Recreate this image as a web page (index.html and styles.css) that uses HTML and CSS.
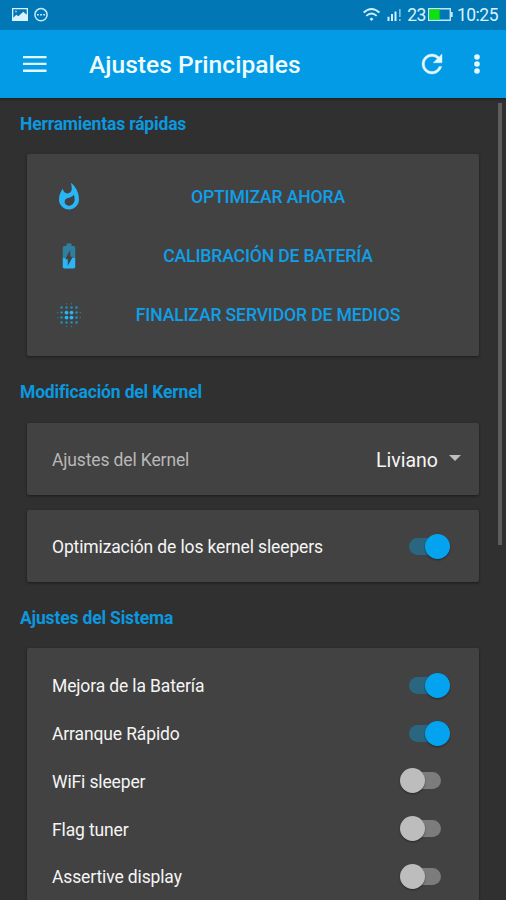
FILE: index.html
```html
<!DOCTYPE html>
<html lang="es">
<head>
<meta charset="utf-8">
<title>Ajustes Principales</title>
<link rel="stylesheet" href="styles.css">
</head>
<body>
<div class="status">
  <svg class="status-left" width="38" height="16" viewBox="0 0 38 16">
    <path fill="#d9f3ff" fill-rule="evenodd" d="M0 1h16v13H0zM1.300 2.300v8.500l3-3 2 1.500 5-4.500 3.400 3V2.300z"/>
    <circle cx="4" cy="4.500" r="1" fill="#8cc9ea"/>
    <circle cx="29" cy="7.700" r="6.100" fill="none" stroke="#c5eafc" stroke-width="1.500"/>
    <path fill="#c5eafc" d="M25 6.900h1.900v1.700H25zM28.100 6.900H30v1.700h-1.900zM31.200 6.900h1.900v1.700h-1.900z"/>
  </svg>
  <div class="status-right">
    <svg width="40" height="16" viewBox="0 0 40 16">
      <g fill="none" stroke="#cdefff" stroke-width="1.900"><path d="M.6 5.500Q8.500-1.700 16.400 5.500M3.300 8.900Q8.500 4.300 13.700 8.900"/></g>
      <path fill="#cdefff" d="M8.500 10.500l2 1.600-2 2-2-2zM24.500 9.800h2V14h-2zM28 7h2v7h-2zM31.500 4.500h2V14h-2z"/>
      <path fill="#7dbfe3" d="M36 2h1.700v8H36zM36 12h1.700v2H36z"/>
    </svg>
    <span class="percent">23</span>
    <svg class="battery" width="25" height="14" viewBox="0 0 25 14"><path d="M.7.700h21.600v11.600H.7z" fill="none" stroke="#bfe8fb" stroke-width="1.400"/><path fill="#0be30b" d="M1.400 1.400h10.200v10.200H1.400z"/><path fill="#bfe8fb" d="M23 4h1.700v5H23z"/></svg>
    <span class="clock">10:25</span>
  </div>
</div>
<header class="appbar">
  <svg class="menu" width="24" height="18" viewBox="0 0 24 18"><path fill="#e4f8ff" d="M0 1h23.500v2.300H0zM0 7.800h23.500v2.300H0zM0 14.600h23.500v2.300H0z"/></svg>
  <h1>Ajustes Principales</h1>
  <svg class="refresh" viewBox="0 0 24 24"><path fill="#e4f8ff" stroke="#e4f8ff" stroke-width=".3" d="M17.650 6.350C16.200 4.900 14.210 4 12 4c-4.420 0-7.990 3.580-7.990 8s3.570 8 7.990 8c3.730 0 6.840-2.550 7.730-6h-2.080c-.82 2.330-3.040 4-5.650 4-3.310 0-6-2.690-6-6s2.690-6 6-6c1.660 0 3.140.69 4.220 1.780L13 11h7V4z"/></svg>
  <svg class="more" viewBox="0 0 6 20"><g fill="#e4f8ff"><circle cx="3" cy="3" r="2.800"/><circle cx="3" cy="10" r="2.800"/><circle cx="3" cy="17" r="2.800"/></g></svg>
</header>
<main>
  <h2>Herramientas rápidas</h2>
  <section class="card tools">
    <div class="tool">
      <svg viewBox="0 0 24 24"><path fill="#29b6f6" d="M13.500.67s.74 2.650.74 4.800c0 2.060-1.350 3.730-3.410 3.730-2.070 0-3.630-1.670-3.630-3.730l.03-.36C5.210 7.510 4 10.620 4 14c0 4.420 3.580 8 8 8s8-3.580 8-8C20 8.610 17.410 3.800 13.500.67zM11.710 19c-1.780 0-3.220-1.400-3.220-3.140 0-1.620 1.050-2.760 2.810-3.120 1.770-.36 3.600-1.210 4.620-2.580.39 1.290.59 2.650.59 4.040 0 2.650-2.150 4.800-4.800 4.800z"/></svg>
      <span>OPTIMIZAR AHORA</span>
    </div>
    <div class="tool">
      <svg viewBox="0 0 24 24"><path fill="#2f7f9f" d="M15.670 4H14V2h-4v2H8.330C7.600 4 7 4.600 7 5.330V13.500h2.530L13 7v5.500h2l-.53 1H17V5.330C17 4.600 16.400 4 15.670 4z"/><path fill="#29b6f6" d="M14.470 13.500L11 20v-5.500H9l.53-1H7v7.170C7 21.400 7.600 22 8.330 22h7.330c.74 0 1.340-.6 1.340-1.330V13.500z"/></svg>
      <span>CALIBRACIÓN DE BATERÍA</span>
    </div>
    <div class="tool">
      <svg viewBox="0 0 24 24"><g fill="#2290c0"><circle cx="6" cy="6" r="1"/><circle cx="10" cy="6" r="1"/><circle cx="14" cy="6" r="1"/><circle cx="18" cy="6" r="1"/><circle cx="6" cy="10" r="1"/><circle cx="18" cy="10" r="1"/><circle cx="6" cy="14" r="1"/><circle cx="18" cy="14" r="1"/><circle cx="6" cy="18" r="1"/><circle cx="10" cy="18" r="1"/><circle cx="14" cy="18" r="1"/><circle cx="18" cy="18" r="1"/><circle cx="10" cy="3" r=".5"/><circle cx="14" cy="3" r=".5"/><circle cx="10" cy="21" r=".5"/><circle cx="14" cy="21" r=".5"/><circle cx="3" cy="10" r=".5"/><circle cx="3" cy="14" r=".5"/><circle cx="21" cy="10" r=".5"/><circle cx="21" cy="14" r=".5"/></g><g fill="#29b6f6"><circle cx="10" cy="10" r="1.500"/><circle cx="14" cy="10" r="1.500"/><circle cx="10" cy="14" r="1.500"/><circle cx="14" cy="14" r="1.500"/></g></svg>
      <span>FINALIZAR SERVIDOR DE MEDIOS</span>
    </div>
  </section>
  <h2>Modificación del Kernel</h2>
  <section class="card single">
    <span class="muted">Ajustes del Kernel</span>
    <span class="select">Liviano<i class="caret"></i></span>
  </section>
  <section class="card single">
    <span>Optimización de los kernel sleepers</span><i class="switch on"></i>
  </section>
  <h2>Ajustes del Sistema</h2>
  <section class="card list">
    <div class="row"><span>Mejora de la Batería</span><i class="switch on"></i></div>
    <div class="row"><span>Arranque Rápido</span><i class="switch on"></i></div>
    <div class="row"><span>WiFi sleeper</span><i class="switch"></i></div>
    <div class="row"><span>Flag tuner</span><i class="switch"></i></div>
    <div class="row"><span>Assertive display</span><i class="switch"></i></div>
  </section>
  <div class="scrollbar"></div>
</main>
</body>
</html>
```
FILE: styles.css
```css
* { box-sizing: border-box; }
body {
  margin: 0;
  height: 900px;
  overflow: hidden;
  display: flex;
  flex-direction: column;
  background: #303030;
  color: #f5f5f5;
  font-family: Roboto, "Liberation Sans", sans-serif;
}
svg { display: block; flex: none; }
h1, h2 { margin: 0; font-weight: 500; white-space: nowrap; }

.status {
  flex: none;
  height: 30px;
  padding: 0 8px 0 12px;
  display: flex;
  justify-content: space-between;
  align-items: center;
  background: #0277b6;
  color: #d9f3ff;
  font-size: 17.500px;
  letter-spacing: -.5px;
}
.status-right { display: flex; align-items: center; }
.percent { margin-left: 4px; }
.battery { margin: 0 4px 0 2px; }

.appbar {
  flex: none;
  height: 68px;
  padding: 0 26px 0 23px;
  display: flex;
  align-items: center;
  background: #039be5;
  color: #eefbff;
}
.appbar h1 { margin-left: 42px; flex: 1; font-size: 24.600px; line-height: 32px; padding-top: 2px; }
.refresh { width: 30px; height: 30px; margin-right: 27px; }
.more { width: 6px; height: 20px; }

main { flex: 1; min-height: 0; position: relative; padding: 0 27px; box-shadow: inset 0 3px 3px -2px #1c1c1c; }
h2 { margin-left: -7px; color: #0b98df; font-size: 17.500px; letter-spacing: -.17px; font-weight: 700; line-height: 20px; }
h2:first-child { padding-top: 16px; }

.card { background: #424242; border-radius: 2px; box-shadow: 0 1px 3px rgba(0, 0, 0, .45); }
.tools { height: 202px; margin: 20px 0 26px; padding: 13px 27px; }
.tool { height: 59px; display: flex; align-items: center; color: #0f9fe8; font-size: 17.600px; letter-spacing: -.15px; font-weight: 500; white-space: nowrap; }
.tool svg { width: 30px; height: 30px; }
.tool span { flex: 1; text-align: center; }

.single, .row {
  display: flex;
  align-items: center;
  justify-content: space-between;
  font-size: 17.500px;
  letter-spacing: -.13px;
  white-space: nowrap;
}
.single span, .row span { padding-top: 2px; }
.single { height: 72px; padding: 0 29px 0 25px; }
h2 + .single { margin: 21px 0 15px; padding-right: 18px; }
.single + h2 { margin-top: 26px; }
.muted { color: #b8b8b8; }
.select { display: flex; align-items: center; font-size: 19.500px; letter-spacing: 0; }
.caret { margin: -4px 0 0 11px; border: 6px solid transparent; border-top: 6px solid #bdbdbd; border-bottom: 0; }

.list { height: 270px; margin-top: 20px; padding: 13.500px 29px 0 25px; }
.row { height: 47.750px; }

.switch { width: 50px; height: 26px; padding-left: 9px; display: flex; align-items: center; position: relative; }
.switch::before { content: ""; width: 32px; height: 17px; border-radius: 9px; background: #7c7c7c; }
.switch::after {
  content: "";
  position: absolute;
  left: 0;
  width: 25px;
  height: 25px;
  border-radius: 50%;
  background: #bdbdbd;
  box-shadow: 0 1px 2px rgba(0, 0, 0, .4);
}
.switch.on::before { background: #2b6680; }
.switch.on::after { left: 25px; background: #03a3f0; }

.scrollbar { position: absolute; top: 5px; right: 4px; width: 4px; height: 442px; background: #5d5d5d; }
```
